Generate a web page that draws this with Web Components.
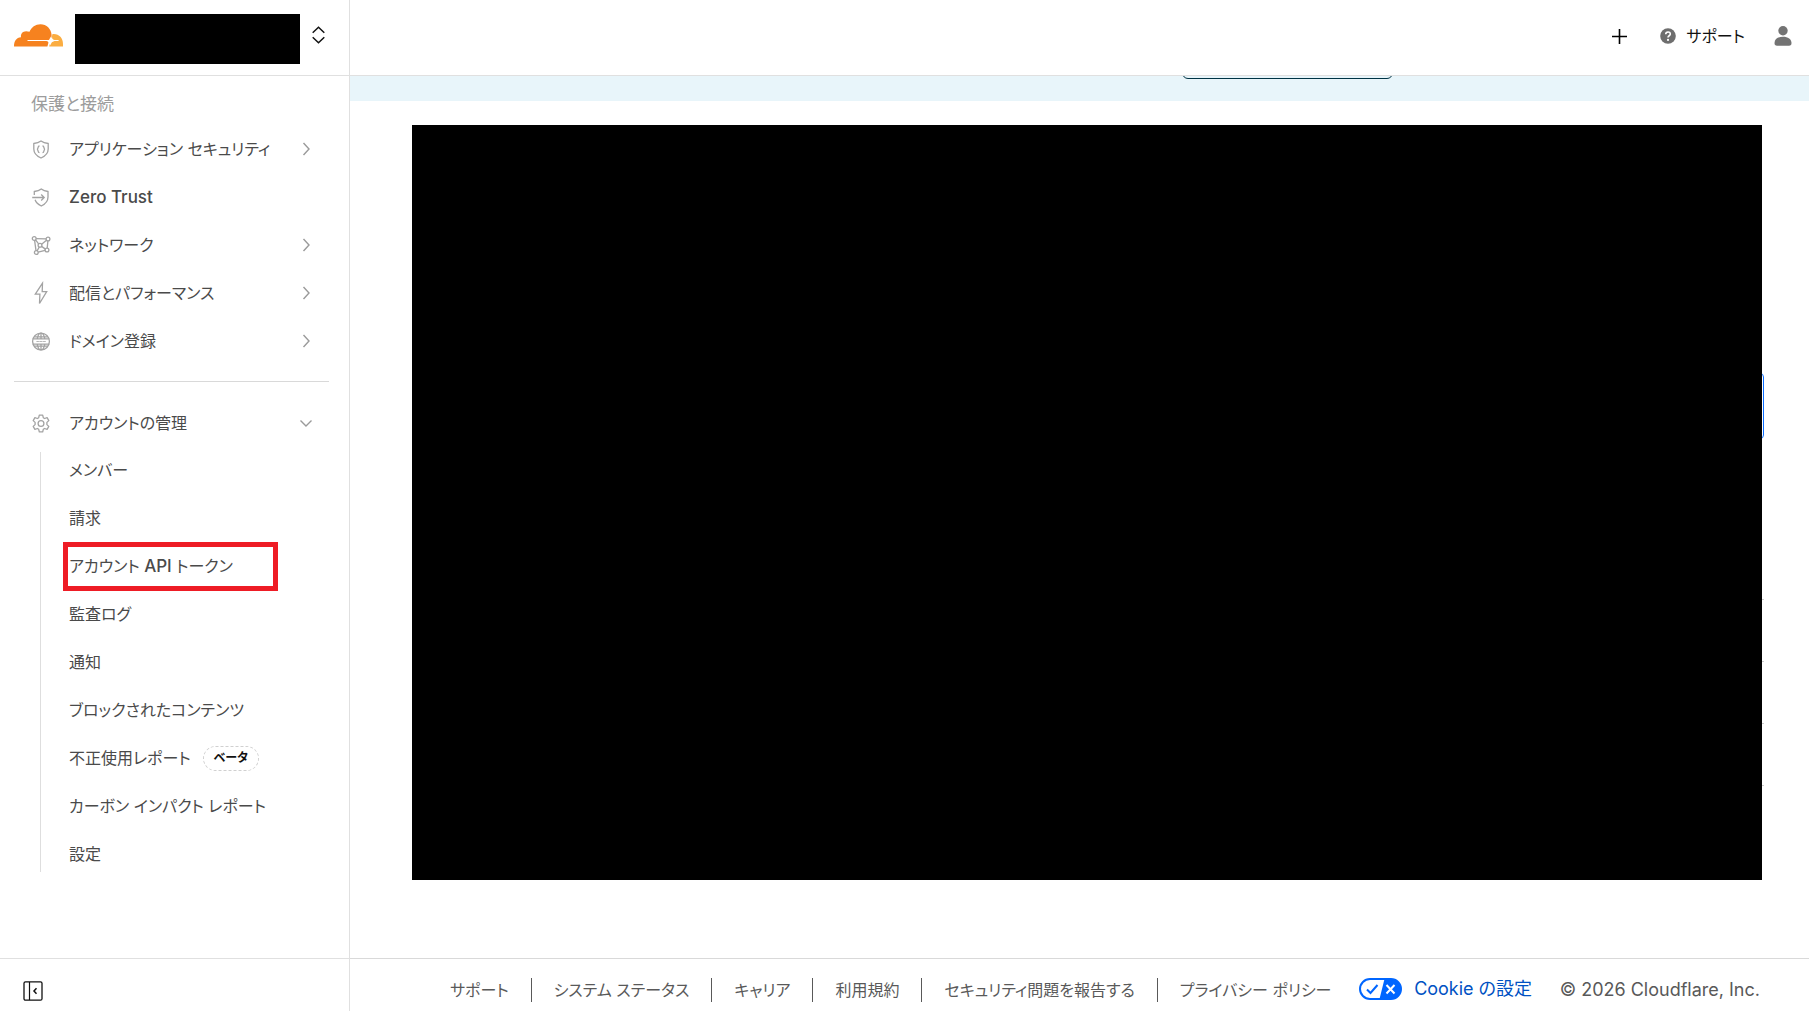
<!DOCTYPE html>
<html lang="ja">
<head>
<meta charset="utf-8">
<title>Cloudflare</title>
<style>
html,body{margin:0;height:100%}
body{font-family:Inter,"Noto Sans CJK JP",sans-serif;font-feature-settings:"palt";font-size:16px;line-height:24px;color:#4a4a4a;background:#fff;overflow:hidden}
</style>
</head>
<body>
<dash-app></dash-app>
<script>
const define=(name,html)=>customElements.define(name,class extends HTMLElement{
  connectedCallback(){
    if(this.shadowRoot)return;
    const t=document.createElement('template');
    t.innerHTML=typeof html==='function'?html(this):html;
    this.attachShadow({mode:'open'}).append(t.content.cloneNode(true));
  }
});

const icons={
  shield:'<path d="M9 1C6.8 2.7 4.3 3.3 1.8 3.5V9c0 4.200 3 7.100 7.200 9 4.200-1.900 7.200-4.800 7.200-9V3.500C13.700 3.300 11.200 2.700 9 1z"/><path d="M7.500 6C5.200 6 6.800 9 5 9.300c1.800.300.200 3.400 2.500 3.400M10.500 6c2.300 0 .7 3 2.500 3.300-1.800.300-.2 3.400-2.500 3.400"/>',
  access:'<path d="M2.300 7V3.500C4.800 3.300 7.300 2.700 9.300 1c2 1.700 4.300 2.300 6.700 2.500V9c0 4.200-2.800 7.100-6.700 9-3-1.500-5.300-3.500-6.200-6.200"/><path d="M.2 9.500h11.900M9.200 6.500l3 3-3 3"/>',
  network:'<circle cx="2.200" cy="2.500" r="1.900"/><circle cx="16" cy="3" r="1.900"/><circle cx="4.300" cy="16.500" r="1.900"/><circle cx="15" cy="14" r="1.900"/><circle cx="8" cy="9.300" r="1.900"/><path d="M4.100 2.600l10 .3M2.600 4.400l1.400 10.200M15.900 4.900l-.7 7.200M6.200 16.100l6.900-1.700M3.600 3.900l3 3.900M14.500 4.200L9.600 8.200M9.600 10.400l3.800 2.700M7.300 11l-2.200 3.800"/>',
  bolt:'<path d="M10.500-.8L3.300 10.200h4.600L7.500 19.500 14.700 7.600h-4.500z"/>',
  globe:'<circle cx="9" cy="9.500" r="8.400"/><path d="M9 1v5.300M9 12.700V18M2.400 4.800h13.200M2.400 14.200h13.200M.8 6.800h16.400M.8 12.200h16.400M5.300 6.600C5.800 3.500 7.300 1.100 9 1.100s3.200 2.400 3.700 5.500M5.300 12.400c.5 3.100 2 5.500 3.700 5.500s3.200-2.400 3.700-5.500"/><path d="M4.500 9l.7 1 .7-1 .7 1 .6-1M7.700 9l.6 1 .7-1 .7 1 .6-1M11 9l.6 1 .7-1 .7 1 .6-1" stroke-width=".7"/>',
  gear:'<circle cx="9" cy="9.500" r="2.900"/><path d="M7.300 1.200h3.400l.6 2.500 1.300.8 2.500-.8 1.700 2.900-1.900 1.800v2.200l1.900 1.800-1.700 2.900-2.500-.8-1.300.8-.6 2.500H7.300l-.6-2.500-1.300-.8-2.500.8-1.700-2.900 1.900-1.800V8.400L1.200 6.600l1.700-2.900 2.500.8 1.300-.8z" stroke-linejoin="round"/>'
};

define('nav-row',el=>{
  const icon=el.getAttribute('icon'),dir=el.getAttribute('arrow');
  return `<style>
  :host{display:block}
  button{all:unset;box-sizing:border-box;width:100%;height:48px;display:flex;align-items:center;cursor:pointer}
  .ic{width:18px;height:19px;margin-right:19px;overflow:visible;fill:none;stroke:#a3a3a3;stroke-width:1.3}
  span{flex:1;white-space:nowrap}
  .ar{width:14px;height:14px;fill:none;stroke:#9a9a9a;stroke-width:1.4}
  </style><button><svg class="ic" viewBox="0 0 18 19">${icons[icon]}</svg><span><slot></slot></span>${
  dir?`<svg class="ar" viewBox="0 0 14 14"><path d="${dir==='down'?'M1.500 4.500L7 10l5.500-5.500':'M4.500 1l5.500 6-5.500 6'}"/></svg>`:''}</button>`;
});

define('sub-link',`<style>
  :host{display:block;position:relative}
  a{display:flex;align-items:center;gap:12px;height:36px;color:inherit;text-decoration:none;white-space:nowrap}
  :host([marked])::after{content:"";position:absolute;left:-6px;top:-6px;width:205px;height:39px;border:5px solid #ee1c25}
  </style><a href="#"><span><slot></slot></span><slot name="badge"></slot></a>`);

define('beta-badge',`<style>
  :host{display:inline-flex;align-items:center;height:23px;padding:0 10px;border:1px dashed #d0d0d0;border-radius:13px;font-size:12px;font-weight:700;color:#111}
  </style><slot></slot>`);

define('cloud-logo',`<style>:host{display:block;width:49px;height:23px}svg{display:block}</style>
  <svg width="49" height="23" viewBox="0 0 49 23"><path fill="#f6821f" d="M0 22.500C0 17 2.300 13.600 7 13.200 6.300 9.200 9.700 5.700 15.500 7.800 17.300 3.200 21.500.2 26.500.2 32.500.2 37.300 4.800 37.600 11c.1 2-.4 3.500-1.600 5H13.500v1H33.500c.8.300 1 1.200.8 2.200l-.9 3.300z"/><path fill="#fbad41" d="M38.300 10.200C44.500 9.300 49 13.800 49 20v2.500H35.200c.6-3.500 2-5.200 5-5.500h4.400v-1h-4c-2.300-.2-3.200-2.300-2.300-5.800z"/><path fill="#fff" d="M36.500 12.500c.6 2.900 1.700 4 4.200 4.500-2.500.5-3.600 1.600-4.200 4.500-.6-2.900-1.700-4-4.200-4.500 2.500-.5 3.600-1.600 4.200-4.500z"/></svg>`);

define('account-switcher',`<style>
  :host{box-sizing:border-box;display:flex;align-items:center;height:76px;padding:0 24px 0 14px;border-bottom:1px solid #e0e0e0}
  cloud-logo{margin:0 12px 5px 0}
  .name{flex:1;height:50px;background:#000;margin-bottom:-3px}
  button{all:unset;margin:0 0 5px 12px;width:13px;height:18px}
  svg{display:block;fill:none;stroke:#111;stroke-width:1.500}
  </style><cloud-logo></cloud-logo><div class="name"></div><button aria-label="アカウントの切り替え"><svg width="13" height="18" viewBox="0 0 13 18"><path d="M.7 6.800L6.500 1.200l5.800 5.600M.7 11.200l5.800 5.600 5.800-5.600"/></svg></button>`);

define('side-nav',`<style>
  :host{box-sizing:border-box;display:flex;flex-direction:column;width:350px;border-right:1px solid #e0e0e0;flex:none}
  nav{flex:1;padding:16px 20px 0 14px;font-weight:400}
  h2{margin:0 0 9px 17px;font-size:17px;line-height:24px;font-weight:400;color:#9c9c9c}
  .g{padding:0 16px 0 18px}
  hr{border:0;border-top:1px solid #d9d9d9;margin:16px 0 17px}
  .sub{display:flex;flex-direction:column;gap:12px;margin:5px 0 0 26px;padding-left:28px;border-left:1px solid #dedede}
  b{font-weight:500;font-size:17px}
  footer{box-sizing:border-box;height:53px;border-top:1px solid #e0e0e0;padding:22px 23px}
  footer button{all:unset;display:block;width:20px;height:20px}
  footer svg{display:block;fill:none;stroke:#111}
  </style>
  <account-switcher></account-switcher>
  <nav><h2>保護と接続</h2>
  <div class="g"><nav-row icon="shield" arrow="right">アプリケーション セキュリティ</nav-row>
  <nav-row icon="access"><b>Zero Trust</b></nav-row>
  <nav-row icon="network" arrow="right">ネットワーク</nav-row>
  <nav-row icon="bolt" arrow="right">配信とパフォーマンス</nav-row>
  <nav-row icon="globe" arrow="right">ドメイン登録</nav-row></div>
  <hr>
  <div class="g"><nav-row icon="gear" arrow="down">アカウントの管理</nav-row></div>
  <div class="sub"><sub-link>メンバー</sub-link><sub-link>請求</sub-link><sub-link marked>アカウント <b>API</b> トークン</sub-link><sub-link>監査ログ</sub-link><sub-link>通知</sub-link><sub-link>ブロックされたコンテンツ</sub-link><sub-link>不正使用レポート<beta-badge slot="badge">ベータ</beta-badge></sub-link><sub-link>カーボン インパクト レポート</sub-link><sub-link>設定</sub-link></div>
  </nav>
  <footer><button aria-label="サイドバーを折りたたむ"><svg width="20" height="20" viewBox="0 0 20 20"><rect x="1" y=".8" width="18" height="18.400" rx="1.500" stroke-width="1.300"/><path d="M6.500 1v18" stroke-width="1.200"/><path d="M13.500 7.300L11 10l2.500 2.700" stroke-width="1.500"/></svg></button></footer>`);

define('top-bar',`<style>
  :host{box-sizing:border-box;display:flex;align-items:center;justify-content:flex-end;height:76px;padding:0 17px 3px 0;border-bottom:1px solid #e0e0e0;color:#111;flex:none}
  button{all:unset;display:flex;align-items:center;gap:10px;white-space:nowrap}
  .add{margin-right:33px}.help{margin-right:29px}
  svg{display:block}
  </style>
  <button class="add" aria-label="追加"><svg width="15" height="15" viewBox="0 0 15 15"><path d="M7.500 0v15M0 7.500h15" stroke="#000" stroke-width="1.600"/></svg></button>
  <button class="help"><svg width="16" height="16" viewBox="0 0 16 16"><circle cx="8" cy="8" r="7.800" fill="#6e6e6e"/><path d="M5.700 6.300C5.800 3.200 10.300 3.300 10.300 6 10.300 7.700 8 7.800 8 9.500" fill="none" stroke="#fff" stroke-width="1.600"/><circle cx="8" cy="11.900" r="1.100" fill="#fff"/></svg>サポート</button>
  <button aria-label="プロフィール"><svg width="18" height="20" viewBox="0 0 18 20"><circle cx="9" cy="4.700" r="4.700" fill="#737373"/><path fill="#737373" d="M.5 17C.5 13 4 10.700 9 10.700s8.500 2.300 8.500 6.300c0 2-.8 2.700-2.500 2.700H3C1.300 19.700.5 19 .5 17z"/></svg></button>`);

define('notice-banner',`<style>
  :host{box-sizing:border-box;display:flex;align-items:flex-end;justify-content:flex-end;height:25px;padding:0 416px 22px 0;background:#e8f5fa;overflow:hidden;flex:none}
  button{box-sizing:border-box;flex:none;width:211px;height:36px;padding:0;border:1px solid #003344;border-radius:6px;background:none}
  </style><button aria-label="詳細"></button>`);

define('page-panel',`<style>
  :host{display:block;position:relative;flex:1;margin:24px 45px 78px 62px}
  .under{height:100%;box-sizing:border-box;padding-top:248px}
  .pick{box-sizing:border-box;height:66px;border:1px solid #0a6cff;border-radius:4px;margin-bottom:160px}
  .row{box-sizing:border-box;height:62px;border-top:1px solid #ccc}
  .cover{position:absolute;inset:0 2px 0 0;background:#000}
  </style><div class="under"><div class="pick"></div><div class="row"></div><div class="row"></div><div class="row"></div><div class="row"></div></div><div class="cover"></div>`);

define('page-footer',`<style>
  :host{box-sizing:border-box;display:flex;align-items:center;justify-content:space-between;height:53px;padding:10px 49px 0 78px;border-top:1px solid #d9d9d9;font-size:18px;color:#595959;white-space:nowrap;flex:none}
  ul{display:flex;list-style:none;margin:0;padding:0;font-size:16px}
  li{display:flex;padding:0 22px}
  li+li{border-left:1px solid #595959}
  li:last-child{padding-right:0}
  a{color:inherit;text-decoration:none}
  .ck{display:flex;align-items:center;gap:12px;color:#0051c3;margin-bottom:3px}
  svg{display:block}
  </style>
  <ul><li><a href="#">サポート</a></li><li><a href="#">システム ステータス</a></li><li><a href="#">キャリア</a></li><li><a href="#">利用規約</a></li><li><a href="#">セキュリティ問題を報告する</a></li><li><a href="#">プライバシー ポリシー</a></li></ul>
  <a href="#" class="ck"><svg width="43" height="22" viewBox="0 0 43 22"><rect x="1" y="1" width="41" height="20" rx="10" fill="#fff"/><path d="M25.500 1H32a10 10 0 0 1 0 20H20.500z" fill="#06f"/><rect x="1" y="1" width="41" height="20" rx="10" fill="none" stroke="#06f" stroke-width="2"/><path d="M8 11.500l3.500 3.500 7-8" fill="none" stroke="#06f" stroke-width="2"/><path d="M27.500 7l8 8.500M35.500 7l-8 8.500" stroke="#fff" stroke-width="2"/></svg>Cookie の設定</a>
  <span>© 2026 Cloudflare, Inc.</span>`);

define('dash-app',`<style>
  :host{display:flex;height:100vh}
  main{flex:1;min-width:0;display:flex;flex-direction:column}
  </style><side-nav></side-nav><main><top-bar></top-bar><notice-banner></notice-banner><page-panel></page-panel><page-footer></page-footer></main>`);
</script>
</body>
</html>
